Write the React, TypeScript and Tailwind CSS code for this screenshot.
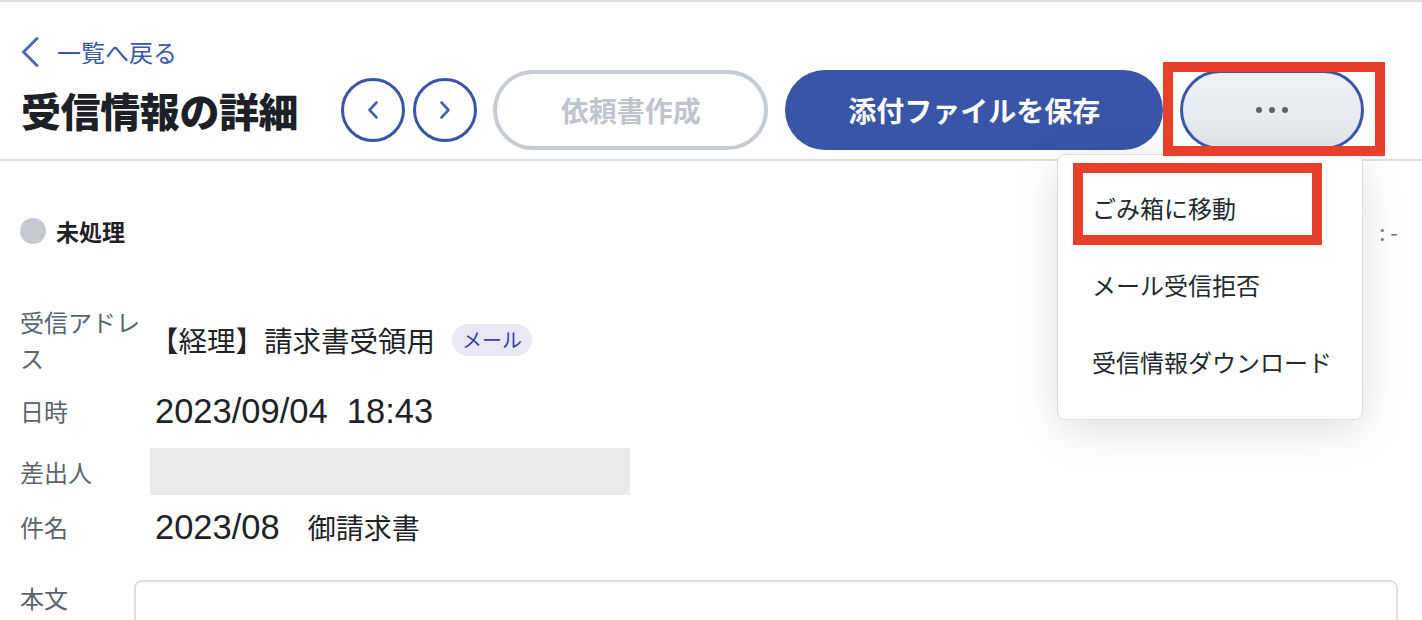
import React from "react";

const FONT = { fontFamily: '"Noto Sans CJK JP", "Noto Sans", sans-serif' };
const NUM = { fontFamily: '"Liberation Sans", Arial, sans-serif' };

function Chevron({ dir, className }: { dir: "left" | "right"; className?: string }) {
  return (
    <svg viewBox="0 0 12 20" className={className} fill="none">
      <path
        d={dir === "left" ? "M9.5 2.5 L2.5 10 L9.5 17.5" : "M2.5 2.5 L9.5 10 L2.5 17.5"}
        stroke="#4863b1"
        strokeWidth="2.6"
        strokeLinecap="round"
        strokeLinejoin="round"
      />
    </svg>
  );
}

export default function App() {
  return (
    <div
      className="relative w-[1422px] h-[620px] overflow-hidden bg-white border-t-2 border-[#dde1e6] text-[#1f2328]"
      style={FONT}
    >
      {/* Header */}
      <header className="border-b-2 border-[#dde1e6] pl-[20px] pt-[35px] pb-[9px]">
        <div className="flex items-center h-[30px]">
          <svg width="20" height="30" viewBox="0 0 20 30" fill="none">
            <path d="M17 1.5 L3.5 15 L17 28.5" stroke="#5068b4" strokeWidth="3" strokeLinecap="round" strokeLinejoin="round" />
          </svg>
          <span className="ml-[17px] text-[24px] leading-none text-[#3b57a8]">一覧へ戻る</span>
        </div>
        <div className="flex items-center h-[80px] mt-[3px]">
          <h1 className="ml-[1px] text-[40px] font-black leading-none tracking-[-0.4px] text-[#1d2127]">受信情報の詳細</h1>
          <div className="ml-[43px] flex gap-2">
            <button className="w-16 h-16 rounded-full border-[3px] border-[#3955a8] flex items-center justify-center bg-white">
              <Chevron dir="left" className="w-[12px] h-[20px]" />
            </button>
            <button className="w-16 h-16 rounded-full border-[3px] border-[#3955a8] flex items-center justify-center bg-white">
              <Chevron dir="right" className="w-[12px] h-[20px]" />
            </button>
          </div>
          <button className="ml-4 w-[275px] h-[80px] rounded-full border-4 border-[#c7ccd4] bg-white text-[28px] font-bold text-[#c0c5cd]">
            依頼書作成
          </button>
          <button className="ml-[17px] w-[378px] h-[80px] rounded-full bg-[#3955a8] text-[28px] font-bold text-white">
            添付ファイルを保存
          </button>
          <button className="ml-[17px] w-[184px] h-[80px] rounded-full border-[3px] border-[#3955a8] bg-gradient-to-b from-[#eef1f6] to-[#e2e6ec] flex items-center justify-center gap-[7px]">
            <span className="w-[6px] h-[6px] rounded-full bg-[#5c626b]" />
            <span className="w-[6px] h-[6px] rounded-full bg-[#5c626b]" />
            <span className="w-[6px] h-[6px] rounded-full bg-[#5c626b]" />
          </button>
        </div>
      </header>

      {/* Content */}
      <main className="pl-[20px] pr-[24px]">
        <div className="mt-[52px] h-[36px] flex items-center justify-between">
          <div className="flex items-center">
            <span className="w-[26px] h-[26px] rounded-full bg-[#c4c9d2]" />
            <span className="ml-[10px] text-[23px] font-bold leading-none text-[#1d2127]">未処理</span>
          </div>
          <span className="text-[22px] text-[#6f7a89] leading-none">: -</span>
        </div>

        <div className="mt-[55px] flex items-center h-[72px]">
          <div className="w-[130px] pr-[8px] text-[24px] leading-[36px] text-[#5a636e]">受信アドレス</div>
          <div className="flex items-center">
            <span className="text-[28.5px] leading-none">【経理】請求書受領用</span>
            <span className="ml-[17px] h-[32px] px-[10px] rounded-full bg-[#e8e8f5] text-[20px] text-[#3b3fa6] flex items-center">メール</span>
          </div>
        </div>

        <div className="mt-[17px] flex items-center h-[36px]">
          <div className="w-[130px] text-[24px] text-[#5a636e]">日時</div>
          <div className="text-[34.5px] leading-none ml-[5px] text-[#1f2328]" style={NUM}>
            2023/09/04&nbsp;&nbsp;18:43
          </div>
        </div>

        <div className="mt-[19px] flex items-center h-[47px]">
          <div className="w-[130px] text-[24px] text-[#5a636e]">差出人</div>
          <div className="w-[480px] h-[47px] bg-[#eaeaea]" />
        </div>

        <div className="mt-[14px] flex items-center h-[36px]">
          <div className="w-[130px] text-[24px] text-[#5a636e]">件名</div>
          <div className="flex items-center ml-[5px]">
            <span className="text-[34.5px] leading-none" style={NUM}>2023/08</span>
            <span className="text-[28px] leading-none">　御請求書</span>
          </div>
        </div>

        <div className="mt-[35px] flex items-start">
          <div className="w-[114px] text-[24px] leading-[36px] text-[#5a636e]">本文</div>
          <div className="flex-1 h-[120px] rounded-[8px] border-2 border-[#dde1e6]" />
        </div>
      </main>

      {/* Dropdown menu */}
      <div className="absolute left-[1057px] top-[152px] w-[306px] rounded-[8px] border border-[#d9dde3] bg-white pt-[14px] pb-[19px] shadow-[0_10px_44px_rgba(0,0,0,0.13)]">
        {["ごみ箱に移動", "メール受信拒否", "受信情報ダウンロード"].map((t) => (
          <div key={t} className="h-[77px] flex items-center pl-[34px] text-[24px] text-[#24292f]">
            {t}
          </div>
        ))}
      </div>

      {/* Annotation outlines */}
      <div className="absolute left-[1163px] top-[60px] w-[222px] h-[94px] border-[10px] border-[#e63f2a]" />
      <div className="absolute left-[1073px] top-[161px] w-[249px] h-[82px] border-[10px] border-[#e63f2a]" />
    </div>
  );
}
